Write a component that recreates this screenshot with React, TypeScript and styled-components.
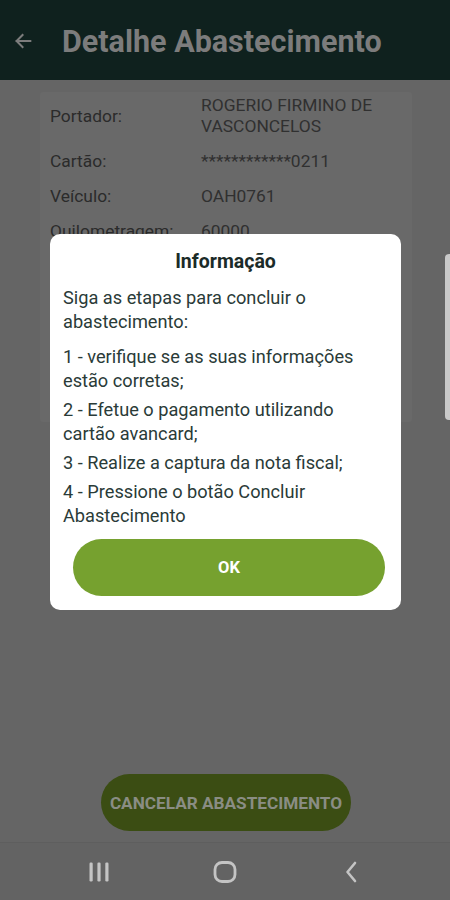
import React from "react";
import styled, { createGlobalStyle } from "styled-components";

const GlobalStyle = createGlobalStyle`
  html, body {
    margin: 0;
    padding: 0;
    background: #656565;
  }
  body {
    font-family: Roboto, "Noto Sans", sans-serif;
  }
`;

const Screen = styled.div`
  position: relative;
  width: 450px;
  height: 900px;
  overflow: hidden;
  display: flex;
  flex-direction: column;
  background: #656565;
`;

const Header = styled.header`
  height: 80px;
  flex-shrink: 0;
  display: flex;
  align-items: center;
  padding: 2px 0 0 11px;
  background: #0f211e;
  box-sizing: border-box;
`;

const BackButton = styled.button`
  width: 24px;
  height: 24px;
  padding: 0;
  border: none;
  background: none;
  display: flex;
  align-items: center;
  justify-content: center;
`;

const Title = styled.h1`
  margin: 0 0 0 27px;
  font-size: 30.5px;
  font-weight: 700;
  color: #7c7c7c;
`;

const Content = styled.main`
  flex: 1;
  display: flex;
  flex-direction: column;
  padding: 12px 38px 0 40px;
`;

const DetailCard = styled.section`
  height: 330px;
  box-sizing: border-box;
  padding: 3px 10px;
  background: #696969;
  border-radius: 3px;
  display: flex;
  flex-direction: column;
  gap: 14px;
`;

const DetailRow = styled.div`
  display: grid;
  grid-template-columns: 151px 1fr;
  align-items: center;
  font-size: 17.4px;
  line-height: 21px;
  color: #2b2b2b;
`;

const Label = styled.span``;

const Value = styled.span`
  color: #303030;
`;

const CancelButton = styled.button`
  margin: auto auto 11px;
  width: 250px;
  height: 57px;
  padding: 0;
  border: none;
  border-radius: 29px;
  background: #3b4d13;
  color: #8a8d84;
  font-family: Roboto, sans-serif;
  font-size: 17.2px;
  font-weight: 700;
  white-space: nowrap;
`;

const NavBar = styled.nav`
  height: 58px;
  flex-shrink: 0;
  display: grid;
  grid-template-columns: repeat(3, 126px);
  justify-content: center;
  align-items: center;
  background: #636363;
  border-top: 1px solid #5e5e5e;
  box-sizing: border-box;
`;

const NavItem = styled.div`
  display: flex;
  justify-content: center;
  align-items: center;
`;

const EdgeHandle = styled.div`
  position: absolute;
  right: 0;
  top: 254px;
  width: 5px;
  height: 166px;
  background: #c9c9c9;
  border-radius: 4px 0 0 4px;
`;

const Dialog = styled.div`
  position: absolute;
  left: 50px;
  top: 234px;
  width: 351px;
  box-sizing: border-box;
  padding: 14px 13px 14px 13px;
  background: #ffffff;
  border-radius: 10px;
  display: flex;
  flex-direction: column;
`;

const DialogTitle = styled.h2`
  margin: 0;
  text-align: center;
  font-size: 19.5px;
  line-height: 28px;
  font-weight: 700;
  color: #1b2b28;
`;

const DialogBody = styled.div`
  margin-top: 10px;
  display: flex;
  flex-direction: column;
  gap: 5px;
  font-size: 18.2px;
  line-height: 24px;
  color: #2a3b38;
`;

const Paragraph = styled.p<{ $after?: number }>`
  margin: 0 0 ${(p) => p.$after ?? 0}px;
`;

const OkButton = styled.button`
  margin: 11px 3px 0 10px;
  height: 57px;
  border: none;
  border-radius: 29px;
  background: #76a12f;
  color: #ffffff;
  font-family: Roboto, sans-serif;
  font-size: 16.5px;
  font-weight: 700;
`;

const details = [
  { label: "Portador:", value: "ROGERIO FIRMINO DE VASCONCELOS" },
  { label: "Cartão:", value: "************0211" },
  { label: "Veículo:", value: "OAH0761" },
  { label: "Quilometragem:", value: "60000" },
];

const steps = [
  "1 - verifique se as suas informações estão corretas;",
  "2 - Efetue o pagamento utilizando cartão avancard;",
  "3 - Realize a captura da nota fiscal;",
  "4 - Pressione o botão Concluir Abastecimento",
];

const App = () => {
  return (
    <>
      <GlobalStyle />
      <Screen>
        <Header>
          <BackButton aria-label="Voltar">
            <svg width="22" height="22" viewBox="0 0 24 24" fill="none" stroke="#7c7c7c" strokeWidth="2.2" strokeLinecap="square">
              <path d="M20 12H5M11.5 5.5L5 12l6.5 6.5" />
            </svg>
          </BackButton>
          <Title>Detalhe Abastecimento</Title>
        </Header>

        <Content>
          <DetailCard>
            {details.map((d) => (
              <DetailRow key={d.label}>
                <Label>{d.label}</Label>
                <Value>{d.value}</Value>
              </DetailRow>
            ))}
          </DetailCard>
          <CancelButton>CANCELAR ABASTECIMENTO</CancelButton>
        </Content>

        <NavBar>
          <NavItem>
            <svg width="22" height="22" viewBox="0 0 22 22" fill="#c4c4c4">
              <rect x="1.5" y="1.5" width="3.2" height="19" rx="1.2" />
              <rect x="9.4" y="1.5" width="3.2" height="19" rx="1.2" />
              <rect x="17.3" y="1.5" width="3.2" height="19" rx="1.2" />
            </svg>
          </NavItem>
          <NavItem>
            <svg width="24" height="22" viewBox="0 0 24 22" fill="none" stroke="#c4c4c4" strokeWidth="2.8">
              <rect x="2" y="1.5" width="20" height="19" rx="7" />
            </svg>
          </NavItem>
          <NavItem>
            <svg width="14" height="22" viewBox="0 0 14 22" fill="none" stroke="#c4c4c4" strokeWidth="2.6" strokeLinecap="round" strokeLinejoin="round">
              <path d="M11 2L3.5 11l7.5 9" />
            </svg>
          </NavItem>
        </NavBar>

        <EdgeHandle />

        <Dialog role="dialog">
          <DialogTitle>Informação</DialogTitle>
          <DialogBody>
            <Paragraph $after={6}>Siga as etapas para concluir o abastecimento:</Paragraph>
            {steps.map((s) => (
              <Paragraph key={s}>{s}</Paragraph>
            ))}
          </DialogBody>
          <OkButton>OK</OkButton>
        </Dialog>
      </Screen>
    </>
  );
};

export default App;
